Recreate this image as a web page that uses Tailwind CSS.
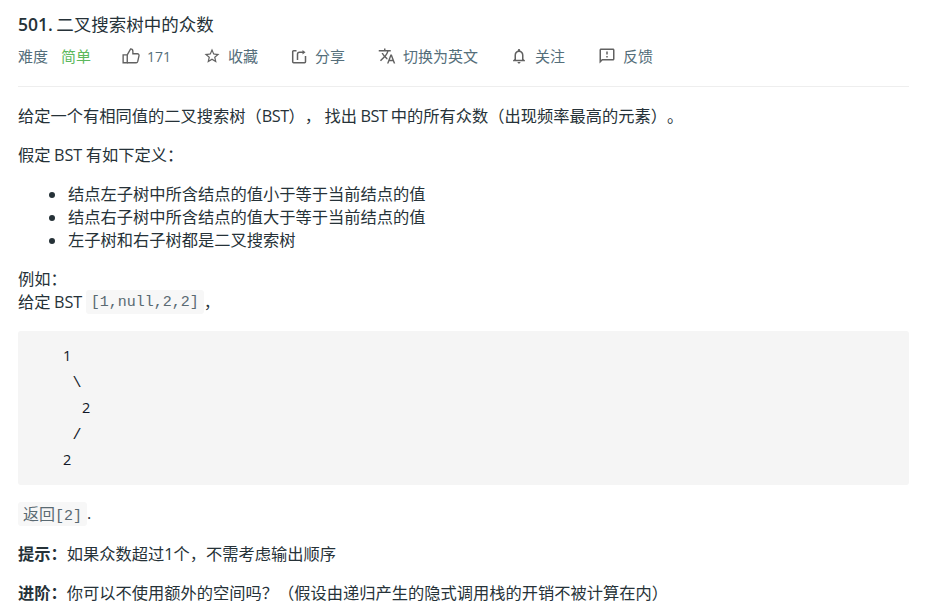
<!DOCTYPE html>
<html lang="zh-CN">
<head>
    <meta charset="UTF-8">
    <title>501. 二叉搜索树中的众数</title>
    <script src="https://cdn.jsdelivr.net/npm/@tailwindcss/browser@4"></script>
</head>
<body class="bg-white font-['Open_Sans','Noto_Sans_CJK_SC',sans-serif] text-[#263238] [text-spacing-trim:space-all]">
    <div class="w-[891px] ml-[18px] pt-[11px]">
        <h1 class="text-[17.5px] leading-[26px] font-normal [word-spacing:-1px]"><span class="font-semibold">501.</span> 二叉搜索树中的众数</h1>

        <div class="flex items-center h-[24px] mt-[7px] text-[15px] text-[#546e7a]">
            <span>难度</span>
            <span class="ml-[13px] text-[#5cb85c]">简单</span>
            <svg class="ml-[31px] w-[18px] h-[18px] text-[#616161]" viewBox="0 0 24 24" fill="none" stroke="currentColor" stroke-width="1.8"><path d="M1.5 10.5h5.5v10.5H1.5z"/><path d="M7 10.5 11.5 2.5c2 0 3 1 3 3V9h6c1.5 0 2.5 1.2 2.2 2.6L21 19.2c-.3 1.2-1 1.8-2.2 1.8H7"/></svg>
            <span class="ml-[7px] text-[14px]">171</span>
            <svg class="ml-[32px] w-[18px] h-[18px] text-[#616161]" viewBox="0 0 24 24" fill="currentColor"><path d="M22 9.24l-7.19-.62L12 2 9.19 8.63 2 9.24l5.46 4.73L5.82 21 12 17.27 18.18 21l-1.63-7.03L22 9.24zM12 15.4l-3.76 2.27 1-4.28-3.32-2.88 4.38-.38L12 6.1l1.71 4.04 4.38.38-3.32 2.88 1 4.28L12 15.4z"/></svg>
            <span class="ml-[7px]">收藏</span>
            <svg class="ml-[33px] w-[17px] h-[17px] text-[#616161]" viewBox="0 0 17 17" fill="none" stroke="currentColor" stroke-width="1.5"><path d="M5.5 2.8H2.6a.9.9 0 0 0-.9.9v10.1c0 .5.4.9.9.9h11a.9.9 0 0 0 .9-.9V8"/><path d="M6.5 12V6.2a2 2 0 0 1 2-2h3.5"/><path d="M11.5 2l3 2.2-3 2.2z" fill="currentColor" stroke="none"/></svg>
            <span class="ml-[7px]">分享</span>
            <svg class="ml-[33px] w-[18px] h-[18px] text-[#616161]" viewBox="0 0 24 24" fill="currentColor"><path d="M12.87 15.07l-2.54-2.51.03-.03c1.74-1.94 2.98-4.17 3.71-6.53H17V4h-7V2H8v2H1v1.99h11.17C11.5 7.92 10.44 9.75 9 11.35 8.07 10.32 7.3 9.19 6.69 8h-2c.73 1.63 1.73 3.17 2.98 4.56l-5.09 5.02L4 19l5-5 3.11 3.11.76-2.04zM18.5 10h-2L12 22h2l1.12-3h4.75L21 22h2l-4.5-12zm-2.62 7l1.62-4.33L19.12 17h-3.24z"/></svg>
            <span class="ml-[7px]">切换为英文</span>
            <svg class="ml-[32px] w-[18px] h-[18px] text-[#616161]" viewBox="0 0 24 24" fill="currentColor"><path d="M12 22c1.1 0 2-.9 2-2h-4c0 1.1.9 2 2 2zm6-6v-5c0-3.07-1.63-5.64-4.5-6.32V4c0-.83-.67-1.5-1.5-1.5s-1.5.67-1.5 1.5v.68C7.64 5.36 6 7.92 6 11v5l-2 2v1h16v-1l-2-2zm-2 1H8v-6c0-2.48 1.51-4.5 4-4.5s4 2.02 4 4.5v6z"/></svg>
            <span class="ml-[7px]">关注</span>
            <svg class="ml-[33px] w-[18px] h-[18px] text-[#616161]" viewBox="0 0 24 24" fill="currentColor"><path d="M20 2H4c-1.1 0-1.99.9-1.99 2L2 22l4-4h14c1.1 0 2-.9 2-2V4c0-1.1-.9-2-2-2zm0 14H5.17L4 17.17V4h16v12zm-9-4h2v2h-2zm0-6h2v4h-2z"/></svg>
            <span class="ml-[7px]">反馈</span>
        </div>

        <div class="h-px bg-[#eeeeee] mt-[18px]"></div>

        <div class="text-[16.25px] leading-[23px] pt-[18px]">
            <p class="[word-spacing:-0.8px]">给定一个有相同值的二叉搜索树（<span class="tracking-[-0.5px]">BST</span>）， 找出 <span class="tracking-[-0.5px]">BST</span> 中的所有众数（出现频率最高的元素）。</p>
            <p class="mt-[16px] [word-spacing:-0.8px]">假定 BST 有如下定义：</p>
            <ul class="mt-[16px] pl-[31px]">
                <li class="flex items-center h-[23px]"><span class="w-[6px] h-[6px] mr-[13px] rounded-full bg-[#263238]"></span>结点左子树中所含结点的值小于等于当前结点的值</li>
                <li class="flex items-center h-[23px]"><span class="w-[6px] h-[6px] mr-[13px] rounded-full bg-[#263238]"></span>结点右子树中所含结点的值大于等于当前结点的值</li>
                <li class="flex items-center h-[23px]"><span class="w-[6px] h-[6px] mr-[13px] rounded-full bg-[#263238]"></span>左子树和右子树都是二叉搜索树</li>
            </ul>
            <p class="mt-[16px] [word-spacing:-0.8px]">例如：<br>给定 BST <code class="inline-block h-[24px] leading-[26px] align-top -mt-px px-[5px] rounded-[3px] bg-[#f7f7f7] text-[#5a6a72] text-[15px] font-['Liberation_Mono',monospace]">[1,null,2,2]</code>，</p>
            <pre class="mt-[17px] h-[154px] pt-[14px] pb-[10px] pl-[7px] rounded-[3px] bg-[#f5f5f5] text-[15px] leading-[26px] tracking-[0.5px] text-[#111827] font-['Liberation_Mono',monospace]">    <span class="leading-none font-['Open_Sans',sans-serif] text-[14.5px]">1</span>
     \
      <span class="leading-none font-['Open_Sans',sans-serif] text-[14.5px]">2</span>
     /
    <span class="leading-none font-['Open_Sans',sans-serif] text-[14.5px]">2</span></pre>
            <p class="mt-[17px]"><code class="inline-block h-[24px] leading-[24px] align-top px-[5px] rounded-[3px] bg-[#f7f7f7] text-[#5a6a72] text-[15px] font-['Liberation_Mono','Noto_Sans_CJK_SC',monospace]"><span class="text-[16px] font-['Open_Sans','Noto_Sans_CJK_SC',sans-serif]">返回</span>[2]</code>.</p>
            <p class="mt-[17px]"><strong class="font-bold">提示：</strong>如果众数超过1个，不需考虑输出顺序</p>
            <p class="mt-[16px]"><strong class="font-bold">进阶：</strong>你可以不使用额外的空间吗？（假设由递归产生的隐式调用栈的开销不被计算在内）</p>
        </div>
    </div>
</body>
</html>
